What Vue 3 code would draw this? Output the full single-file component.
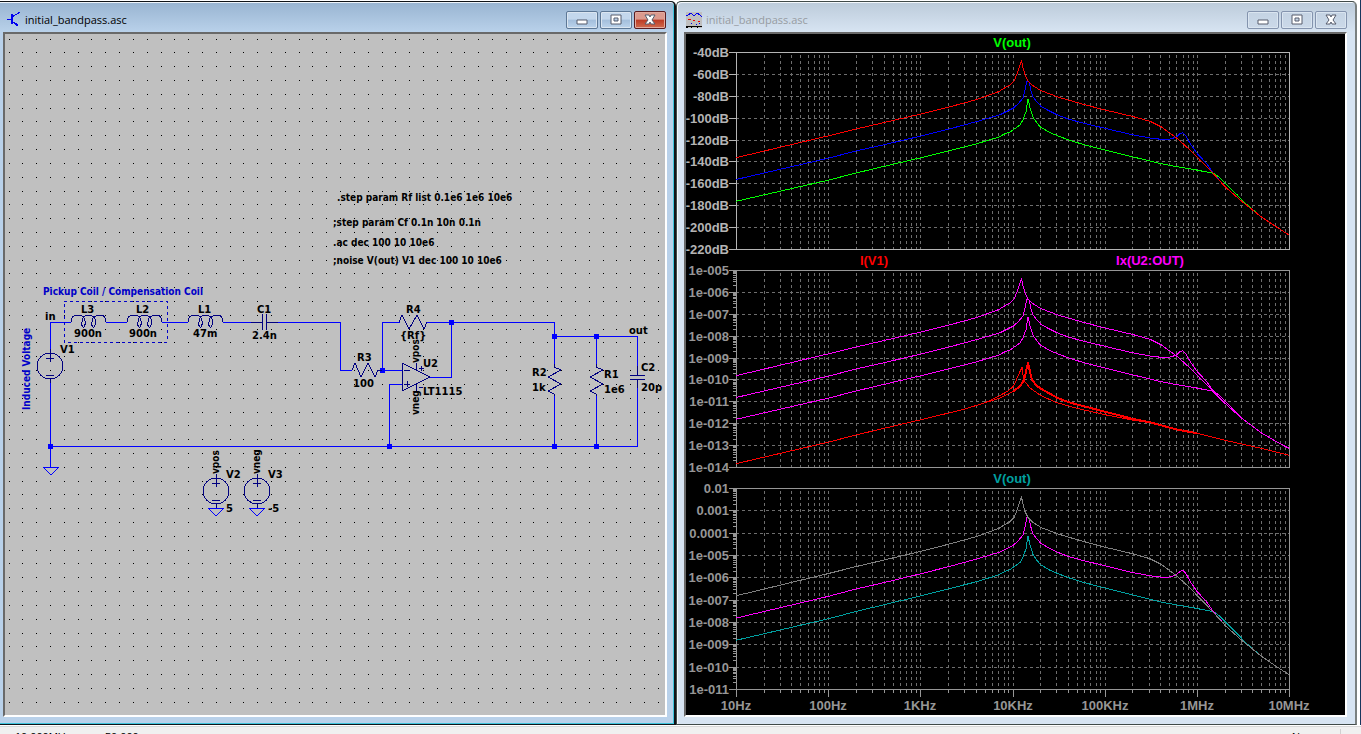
<template>
  <div class="app">
    <main class="workspace">
      <section class="window active">
        <header class="titlebar">
          <svg class="app-icon" width="16" height="16" shape-rendering="crispEdges">
            <path d="M0 8H5M13 1L5 6M5 10L10 14" fill="none" stroke="#0000f0" />
            <path d="M4 3h2v10h-2zM11 15l-4-1 3-3z" fill="#0000f0" />
          </svg>
          <h1 class="title">initial_bandpass.asc</h1>
          <div class="controls">
            <button
              v-for="b in buttons"
              :key="b.name"
              class="control"
              :class="b.name"
              :aria-label="b.name"
            >
              <svg width="16" height="14"><path :d="b.d" fill-rule="evenodd" /></svg>
            </button>
          </div>
        </header>

        <div class="client schematic">
          <svg class="canvas">
            <g transform="translate(-5 -34)">
              <path class="dots" :d="dots" />

              <g class="wires">
                <path
                  d="M71 322H50V353M50 380V467M106 322H127M162 322H188M223 322H251
                     M278 322H340V370H352M378 370H402M382 370V322H400M427 322H554V336H637V366
                     M451 322V377H430M402 384H389V446M50 446H637V388
                     M554 336V364M554 396V446M596 336V364M596 396V446"
                />
                <path v-for="g in grounds" :key="g.x" :d="`M${g.x - 8} ${g.y}h16l-8 8z`" />
              </g>
              <path class="nodes" :d="nodes" />

              <g class="parts">
                <path
                  v-for="x in [71, 127, 188]"
                  :key="x"
                  :transform="`translate(${x} 322)`"
                  d="M0 0C0 -5 3 -7 7 -7C12 -7 15 -3 14 3C13 7 10 5 11 0C11 -5 14 -7 18 -7C22 -7 26 -3 24 3C23 7 20 5 21 0C21 -5 25 -7 29 -7C33 -7 35 -4 35 0"
                />
                <path d="M251 322H262M262 314V330M266 314V330M266 322H278" />
                <path d="M352 370L355 363L361 377L368 363L375 377L378 370H382" />
                <path d="M399 322L402 315L409 329L417 315L424 329L427 322" />
                <path d="M402 363V391L430 377ZM404 370h6M404 384h6M407 381v6M416 363v7M416 384v7M419 368h5M421 366v5M419 387h4" />
                <path
                  v-for="x in [554, 596]"
                  :key="x"
                  :d="`M${x} 364v3l7 3l-13 7l13 7l-13 7l6 3v2`"
                />
                <path d="M637 366V375M630 375H645M630 379H645M637 379V388" />
                <g v-for="s in sources" :key="s.x">
                  <circle :cx="s.x" :cy="s.y" r="13" />
                  <path :d="`M${s.x - 4} ${s.y - 8}h8M${s.x} ${s.y - 12}v8M${s.x - 4} ${s.y + 9}h8M${s.x} ${s.y - 17}v4M${s.x} ${s.y + 13}v4`" />
                </g>
              </g>
              <path class="outline" d="M64 301H167V342H64Z" />

              <text class="note" x="43" y="295">Pickup Coil / Compensation Coil</text>
              <text class="note" transform="translate(30 410) rotate(-90)">Induced Voltage</text>
              <text v-for="d in directives" :key="d.t" class="directive" :x="d.x" :y="d.y">{{ d.t }}</text>
              <text v-for="(l, i) in labels" :key="i" class="label" :x="l[1]" :y="l[2]">{{ l[0] }}</text>
              <text
                v-for="(p, i) in pins"
                :key="'p' + i"
                class="pin"
                :transform="`translate(${p[1]} ${p[2]}) rotate(-90)`"
              >{{ p[0] }}</text>
            </g>
          </svg>
        </div>
      </section>

      <section class="window">
        <header class="titlebar">
          <svg class="app-icon" width="16" height="16" shape-rendering="crispEdges">
            <path d="M0 0H16V16H0Z" fill="#c0c0c0" />
            <path d="M0 4L2 3L5 1L8 4L11 1L14 3L16 5" fill="none" stroke="#0000f0" />
            <path d="M2 7h3v1h-3zM7 8h2v1h-2zM12 9h2v1h-2z" fill="#f00000" />
            <path d="M5 11h1v1h-1zM10 12h1v1h-1zM13 11h1v1h-1z" fill="#0000f0" />
            <path d="M0 14h16v1h-16zM0 15h2v1h-2zM5 15h1v1h-1zM11 15h1v1h-1z" fill="#000" />
          </svg>
          <h2 class="title">initial_bandpass.asc</h2>
          <div class="controls">
            <button
              v-for="b in buttons"
              :key="b.name"
              class="control"
              :class="b.name"
              :aria-label="b.name"
            >
              <svg width="16" height="14"><path :d="b.d" fill-rule="evenodd" /></svg>
            </button>
          </div>
        </header>

        <div class="client plots">
          <svg class="canvas">
            <g transform="translate(-686 -34)">
              <g v-for="p in panels" :key="p.top" :class="['panel', p.tone]">
                <path class="grid" :d="gridV(p)" />
                <path class="grid" :d="gridH(p)" />
                <path class="axis" :d="axis(p)" />
                <polyline
                  v-for="(t, i) in p.traces"
                  :key="i"
                  class="trace"
                  :class="[t.color, { thick: t.thick }]"
                  :points="points(p, t.data)"
                />
                <text
                  v-for="(l, i) in p.ticks"
                  :key="l"
                  class="tick"
                  x="729"
                  :y="rowY(p, i) + 5"
                  text-anchor="end"
                >{{ l }}</text>
                <text
                  v-for="t in p.titles"
                  :key="t.text"
                  class="legend"
                  :class="t.color"
                  :x="t.x"
                  :y="p.top - 5"
                  text-anchor="middle"
                >{{ t.text }}</text>
              </g>
              <g class="panel dim">
                <text
                  v-for="(f, i) in frequencies"
                  :key="f"
                  class="tick"
                  :x="decadeX(i)"
                  y="710"
                  text-anchor="middle"
                >{{ f }}</text>
              </g>
            </g>
          </svg>
        </div>
      </section>
    </main>

    <footer class="statusbar">
      <span class="cursor-x">10.000MHz</span>
      <span class="cursor-y">50.000</span>
      <span class="mode">N</span>
    </footer>
  </div>
</template>

<script setup>
const buttons = [
  { name: "minimize", d: "M3 7h10v4h-10z" },
  { name: "maximize", d: "M3 2h10v9h-10zM6 5h4v3h-4z" },
  { name: "close", d: "M3 2h4l1 2l1 -2h4l-3 5l3 4h-4l-1 -2l-1 2h-4l3 -4z" },
];

// schematic grid, one black pixel per snap point
const STEP = 13.812;
const dots = (() => {
  let d = "";
  for (let j = 0; j < 49; j++) {
    for (let i = 0; i < 48; i++) {
      d += `M${Math.floor(9.1 + STEP * i)} ${Math.floor(39.1 + STEP * j)}h1v1h-1z`;
    }
  }
  return d;
})();

const nodes = [
  [50, 446], [382, 370], [451, 322], [554, 336], [596, 336],
  [389, 446], [554, 446], [596, 446],
]
  .map(([x, y]) => `M${x - 2} ${y - 2}h5v5h-5z`)
  .join("");

const grounds = [
  { x: 51, y: 467 },
  { x: 216, y: 508 },
  { x: 257, y: 508 },
];

const sources = [
  { x: 50, y: 366 },
  { x: 216, y: 491 },
  { x: 257, y: 491 },
];

const directives = [
  { t: ".step param Rf list 0.1e6 1e6 10e6", x: 337, y: 201 },
  { t: ";step param Cf 0.1n 10n 0.1n", x: 333, y: 226 },
  { t: ".ac dec 100 10 10e6", x: 333, y: 246 },
  { t: ";noise V(out) V1 dec 100 10 10e6", x: 333, y: 264 },
];

const labels = [
  ["in", 45, 320],
  ["L3", 81, 313],
  ["900n", 74, 337],
  ["L2", 136, 313],
  ["900n", 129, 337],
  ["L1", 198, 313],
  ["47m", 193, 337],
  ["C1", 257, 313],
  ["2.4n", 252, 339],
  ["V1", 60, 353],
  ["V2", 226, 478],
  ["5", 226, 512],
  ["V3", 268, 478],
  ["-5", 268, 512],
  ["R4", 406, 313],
  ["{Rf}", 400, 339],
  ["R3", 357, 361],
  ["100", 353, 387],
  ["U2", 423, 367],
  ["LT1115", 423, 395],
  ["R2", 532, 376],
  ["1k", 532, 391],
  ["R1", 604, 378],
  ["1e6", 604, 393],
  ["out", 629, 334],
  ["C2", 641, 371],
  ["20p", 641, 391],
];

const pins = [
  ["vpos", 219, 474],
  ["vneg", 260, 474],
  ["vpos", 419, 363],
  ["vneg", 419, 415],
];

// plot geometry
const LEFT = 736;
const RIGHT = 1289;
const DECADE = (RIGHT - LEFT) / 6;
const SPAN = 197;

const frequencies = ["10Hz", "100Hz", "1KHz", "10KHz", "100KHz", "1MHz", "10MHz"];

// traces: x from the left axis, y below the top axis of a 197 high panel
const tail = [[489, 134.7], [505, 148.7], [525, 164.7], [541, 175.3], [553, 183]];
const tailIx = [[489, 133.3], [505, 147.7], [525, 162.7], [541, 172], [553, 178.3]];

const high = [
  [0, 105.7], [93, 83.7], [120, 77], [185, 62], [213, 55], [241, 47.5],
  [256, 42], [263, 39.5], [269, 35.7], [274, 33], [278, 29], [281, 22],
  [284, 13], [285.5, 9], [287, 15.7], [289, 23], [292, 29], [296, 33],
  [305, 38.7], [316, 42.7], [321, 44.7], [332, 48], [348, 52.5], [369, 58],
  [396, 64.3], [414, 69.3], [425, 74.7], [441, 86.3], [454, 98],
  [464, 108.3], [477, 121.3],
];
const mid = [
  [0, 127.5], [93, 106], [120, 99], [148, 92.7], [185, 84], [213, 77],
  [241, 69.5], [264, 62.7], [277, 56.3], [282, 52], [287, 46], [289, 38],
  [291, 28.7], [293, 29.7], [295, 38.7], [297, 45], [301, 50], [305, 54.3],
  [311, 57.7], [321, 62.7], [332, 67], [348, 71.3], [369, 76.3],
  [396, 82.7], [414, 86], [425, 87.3], [433, 87.3], [440, 85.3],
  [444, 81.7], [447, 80.7], [450, 84], [454, 91.3], [461, 101.3],
  [471, 112], [477, 120.7],
];
const low = [
  [0, 149.3], [93, 128], [120, 121], [185, 105.7], [213, 98.7],
  [241, 91.7], [263, 85], [269, 81.7], [274, 80], [284, 73], [287, 67.7],
  [290, 59.7], [292, 47], [294, 55.7], [297, 65.3], [301, 71], [304, 74.7],
  [314, 80.7], [324, 84.7], [332, 87.7], [348, 92.7], [369, 98],
  [396, 104.7], [414, 109], [425, 111.7], [441, 114.7], [457, 117.3],
  [467, 119.3], [478, 121.3], [483, 125], [491, 133], [501, 142.7],
  [511, 152.7], [525, 164.7],
];
const sourceHigh = [
  [249, 132.7], [260, 127.7], [272, 121], [277, 116.7], [279, 113.3],
  [282, 106], [286, 97.3], [287, 105.3], [289, 111.7], [294, 118],
  [305, 125.7], [321, 132.7], [341, 138.3], [369, 144.7], [396, 150],
  [414, 152.7],
];
const sourceRise = [
  [0, 193.7], [93, 172], [120, 165], [148, 158.3], [185, 149.7],
  [228, 139.3], [249, 132.7], [260, 129.3], [264, 128], [277, 121.7],
];
const sourcePeak = [
  [277, 121.7], [284, 116.3],
  [288, 110], [290, 101.7], [292, 92.7], [294, 101.7], [296, 110],
  [301, 116], [305, 118.7], [321, 127.7], [332, 132], [348, 136.3],
  [369, 141.7], [396, 148.7], [414, 152.3], [440, 159.3], [461, 163.3],
];
const sourceFall = [[461, 163.3], [489, 170.3], [525, 178.3], [553, 185.3]];

const panels = [
  {
    top: 52,
    height: 197,
    tone: "bright",
    log: false,
    ticks: ["-40dB", "-60dB", "-80dB", "-100dB", "-120dB", "-140dB", "-160dB", "-180dB", "-200dB", "-220dB"],
    titles: [{ text: "V(out)", x: 1012, color: "green" }],
    traces: [
      { color: "green", data: [...low, ...tail.slice(3)] },
      { color: "blue", data: [...mid, ...tail] },
      { color: "red", data: [...high, ...tail] },
    ],
  },
  {
    top: 270,
    height: 197,
    tone: "dim",
    log: true,
    ticks: ["1e-005", "1e-006", "1e-007", "1e-008", "1e-009", "1e-010", "1e-011", "1e-012", "1e-013", "1e-014"],
    titles: [
      { text: "I(V1)", x: 874, color: "red" },
      { text: "Ix(U2:OUT)", x: 1150, color: "magenta" },
    ],
    traces: [
      { color: "red", data: sourceRise },
      { color: "red", data: sourceHigh },
      { color: "red", data: sourcePeak, thick: true },
      { color: "red", data: sourceFall },
      { color: "magenta", data: [...low.slice(0, -3), ...tailIx.slice(1)] },
      { color: "magenta", data: [...mid, ...tailIx] },
      { color: "magenta", data: [...high, ...tailIx] },
    ],
  },
  {
    top: 488,
    height: 201,
    tone: "dim",
    log: true,
    marks: true,
    ticks: ["0.01", "0.001", "0.0001", "1e-005", "1e-006", "1e-007", "1e-008", "1e-009", "1e-010", "1e-011"],
    titles: [{ text: "V(out)", x: 1012, color: "teal" }],
    traces: [
      { color: "teal", data: [...low, ...tail.slice(3)] },
      { color: "magenta", data: [...mid, ...tail] },
      { color: "gray", data: [...high, ...tail] },
    ],
  },
];

function decadeX(i) {
  return Math.round(LEFT + DECADE * i);
}

function rowY(p, i) {
  return Math.round(p.top + (p.height * i) / 9);
}

function columns() {
  const xs = [];
  for (let d = 0; d < 6; d++) {
    for (let n = 1; n < 10; n++) {
      if (d || n > 1) xs.push({ x: Math.round(LEFT + DECADE * (d + Math.log10(n))), major: n === 1 });
    }
  }
  return xs;
}

function gridV(p) {
  return columns()
    .map((c) => `M${c.x} ${p.top + 3}V${p.top + p.height}`)
    .join("");
}

function gridH(p) {
  let d = "";
  for (let i = 1; i < 9; i++) d += `M${LEFT} ${rowY(p, i)}H${RIGHT}`;
  return d;
}

function axis(p) {
  const bottom = p.top + p.height;
  let d = `M${LEFT} ${p.top}H${RIGHT}V${bottom}H${LEFT}Z`;
  for (let i = 0; i < 10; i++) {
    d += `M${LEFT - 7} ${rowY(p, i)}h7`;
    if (!p.log || i === 9) continue;
    for (let n = 2; n < 10; n++) {
      const y = Math.round(p.top + (p.height / 9) * (i + 1 - Math.log10(n)));
      d += `M${LEFT - 3} ${y}h3`;
    }
  }
  if (p.marks) {
    for (const c of columns()) d += `M${c.x} ${bottom}v${c.major ? 8 : 4}`;
    d += `M${LEFT} ${bottom}v8M${RIGHT} ${bottom}v8`;
  }
  return d;
}

function points(p, data) {
  return data
    .map(([x, y]) => `${LEFT + x},${(p.top + (y * p.height) / SPAN).toFixed(1)}`)
    .join(" ");
}
</script>

<style>
body {
  margin: 0;
  background: #f0f0f0;
}
</style>

<style scoped>
.app {
  display: flex;
  flex-direction: column;
  height: 100vh;
  overflow: hidden;
  background: #f0f0f0;
  font-family: "Open Sans", "Liberation Sans", sans-serif;
}
.workspace {
  flex: 1;
  min-height: 0;
  display: grid;
  grid-template-columns: 676fr 681fr;
  padding: 1px 3px 0 0;
  border-right: 1px solid #17365d;
  background: #fff;
}
.window {
  box-sizing: border-box;
  min-width: 0;
  min-height: 0;
  display: flex;
  flex-direction: column;
  border: 1px solid #404a48;
  border-right: 2px solid #7a8080;
  border-radius: 5px 5px 0 0;
  padding: 0 8px 7px 7px;
  background: linear-gradient(#bccbda 0, #d7e4f2 30px);
  box-shadow: inset 1px 1px 0 #f4f8fc;
}
.window.active {
  border-left: 0;
  border-color: #101418;
  border-radius: 0 5px 0 0;
  padding: 0 7px 7px 3px;
  background: linear-gradient(#98b4d1 0, #b9d1ea 30px);
  box-shadow:
    inset 0 1px 0 #eef4fa,
    inset -1px -1px 0 #3cc4dc;
}

.titlebar {
  flex: none;
  display: flex;
  align-items: center;
  height: 30px;
}
.app-icon {
  flex: none;
  margin: 6px 4px 0 2px;
}
.window.active .app-icon {
  margin: 4px 2px 0 4px;
}
.title {
  flex: 1;
  margin: 6px 0 0;
  font-size: 11px;
  font-weight: 400;
  line-height: 16px;
  color: #979ca2;
}
.window.active .title {
  color: #000;
}
.controls {
  display: flex;
  gap: 2px;
  margin-top: 6px;
}
.window.active .controls {
  margin-right: 1px;
}
.control {
  display: flex;
  align-items: center;
  justify-content: center;
  width: 32px;
  height: 18px;
  padding: 0;
  border: 1px solid #8494ae;
  border-radius: 2px;
  background: linear-gradient(#c4d3e3, #cbd9e9);
  box-shadow: inset 0 0 0 1px #dae5f0;
}
.control path {
  fill: #fff;
  stroke: #565c6c;
}
.window.active .control {
  border-color: #5d7896;
  background: linear-gradient(#c3d7ec 45%, #a3bedb 50%, #bcd4ec);
}
.window.active .control.close {
  border-color: #5a1c20;
  background: linear-gradient(#dc9a8e 45%, #bc3a24 50%, #d06c50);
  box-shadow: inset 0 0 0 1px #e2ab9f;
}

.client {
  flex: 1;
  min-height: 0;
  border: 2px solid;
  border-color: #696969 #fff #fff #696969;
}
.schematic {
  background: #c0c0c0;
}
.plots {
  background: #000;
}
.canvas {
  display: block;
  width: 100%;
  height: 100%;
}

.dots,
.wires,
.nodes,
.parts,
.outline,
.grid,
.axis,
.trace {
  shape-rendering: crispEdges;
}
.dots {
  fill: #000;
}
.wires {
  fill: none;
  stroke: #0000ff;
}
.nodes {
  fill: #0000ff;
}
.parts {
  fill: none;
  stroke: #000080;
}
.outline {
  fill: none;
  stroke: #0000c8;
  stroke-dasharray: 3 3;
}
.note,
.directive,
.label,
.pin {
  font-family: "DejaVu Sans Condensed", "DejaVu Sans", sans-serif;
  font-size: 10px;
  font-weight: 700;
}
.label {
  font-family: "DejaVu Sans", sans-serif;
}
.note {
  fill: #0000c8;
}

.bright {
  --line: #b4b4b4;
}
.dim {
  --line: #969696;
}
.grid {
  fill: none;
  stroke: #6e6e6e;
  stroke-dasharray: 3 3;
}
.axis {
  fill: none;
  stroke: var(--line);
}
.tick,
.legend {
  font-family: "Liberation Sans", Arial, sans-serif;
  font-size: 13px;
  font-weight: 700;
}
.tick {
  fill: var(--line);
}
.trace {
  fill: none;
  stroke: currentColor;
}
.trace.thick {
  stroke-width: 2;
}
.legend {
  fill: currentColor;
}
.green {
  color: #00ff00;
}
.blue {
  color: #0000ff;
}
.red {
  color: #ff0000;
}
.magenta {
  color: #ff00ff;
}
.teal {
  color: #00a0a0;
}
.gray {
  color: #808080;
}

.statusbar {
  box-sizing: border-box;
  flex: none;
  display: flex;
  height: 9px;
  padding: 3px 20px 0 15px;
  border-top: 1px solid #fff;
  overflow: hidden;
  box-shadow: inset 0 1px 0 #d7d7d7;
  font-family: "Liberation Sans", sans-serif;
  font-size: 11px;
  line-height: 16px;
}
.cursor-x {
  width: 90px;
}
.mode {
  margin-left: auto;
  padding-right: 40px;
  border-right: 1px solid #d0d0d0;
}
</style>
